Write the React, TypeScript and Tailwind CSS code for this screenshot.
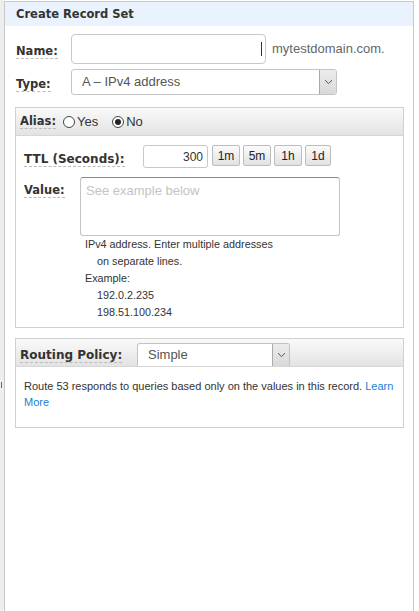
import React from "react";

const bold = { fontFamily: '"DejaVu Sans", Verdana, sans-serif' };
const arial = { fontFamily: '"Liberation Sans", Arial, sans-serif' };

function Label({ children, className = "text-[11.5px]" }: { children: React.ReactNode; className?: string }) {
  return (
    <span
      style={bold}
      className={"inline-block font-bold leading-[14px] text-[#333] border-b border-dashed border-[#bbb] " + className}
    >
      {children}
    </span>
  );
}

function Chevron() {
  return (
    <svg width="9" height="6" viewBox="0 0 9 6" fill="none">
      <path d="M1 1.2 L4.5 4.6 L8 1.2" stroke="#555" strokeWidth="1" />
    </svg>
  );
}

function SelectBox({ value, className }: { value: string; className: string }) {
  return (
    <div
      style={arial}
      className={"flex items-stretch border border-[#c4c4c4] rounded-[3px] bg-white overflow-hidden " + className}
    >
      <div className="flex-1 flex items-center pl-[10px] text-[13px] text-[#555]">{value}</div>
      <div className="w-[17px] flex items-center justify-center border-l border-[#aaa] bg-gradient-to-b from-[#ececec] to-[#d9d9d9]">
        <Chevron />
      </div>
    </div>
  );
}

function Radio({ checked, label }: { checked?: boolean; label: string }) {
  return (
    <div className="flex items-center gap-[2px]">
      <div className="w-[12px] h-[12px] rounded-full border border-[#444] bg-white flex items-center justify-center">
        {checked && <div className="w-[6px] h-[6px] rounded-full bg-[#222]" />}
      </div>
      <span style={arial} className="text-[13px] text-[#333] leading-[14px]">
        {label}
      </span>
    </div>
  );
}

function Btn({ t, w }: { t: string; w: string }) {
  return (
    <div
      style={arial}
      className={
        "h-[21px] flex items-center justify-center border border-[#bdbdbd] rounded-[2px] bg-gradient-to-b from-[#fbfbfb] to-[#e2e2e2] text-[12px] text-[#222] " +
        w
      }
    >
      {t}
    </div>
  );
}

export default function App() {
  return (
    <div className="flex w-[419px] h-[611px] bg-white overflow-hidden">
      <div className="w-[4px] h-[611px] bg-[#eeeeee] flex flex-col">
        <div className="mt-[382px] ml-[1px] w-[1px] h-[6px] bg-[#666]" />
      </div>
      <div className="w-[410px] h-[611px] mt-[1px] border-l border-r border-t border-[#c8c8c8] bg-white flex flex-col">
        <div className="h-[24px] bg-[#eaf2fd] flex items-center pl-[11px] pt-[1px]">
          <span style={bold} className="font-bold text-[11.5px] text-[#333]">
            Create Record Set
          </span>
        </div>

        {/* Name row */}
        <div className="flex items-center mt-[8px] pl-[11px] h-[30px]">
          <div className="w-[55px]">
            <Label>Name:</Label>
          </div>
          <div className="w-[195px] h-[30px] border border-[#c8c8c8] rounded-[4px] bg-white" />
          <div className="w-[1px] h-[14px] bg-[#333] ml-[-5px]" />
          <span style={arial} className="ml-[10px] text-[13px] text-[#666]">
            mytestdomain.com.
          </span>
        </div>

        {/* Type row */}
        <div className="flex items-center mt-[5px] pl-[11px] h-[26px]">
          <div className="w-[55px]">
            <Label>Type:</Label>
          </div>
          <SelectBox value="A – IPv4 address" className="w-[266px] h-[26px]" />
        </div>

        {/* Alias panel */}
        <div className="ml-[10px] mt-[12px] w-[389px] h-[221px] border border-[#d0d0d0] flex flex-col">
          <div className="h-[28px] flex items-center pl-[4px] bg-gradient-to-b from-[#fafafa] to-[#e3e3e3] border-b border-[#d6d6d6]">
            <Label>Alias:</Label>
            <div className="ml-[7px] flex items-center gap-[14px]">
              <Radio label="Yes" />
              <Radio checked label="No" />
            </div>
          </div>

          <div className="flex items-center mt-[9px] pl-[8px] h-[23px]">
            <div className="w-[119px]">
              <Label className="text-[12px]">TTL (Seconds):</Label>
            </div>
            <div
              style={arial}
              className="w-[65px] h-[23px] border border-[#c8c8c8] rounded-[3px] flex items-center justify-end pr-[4px] text-[12px] text-[#333]"
            >
              300
            </div>
            <div className="flex items-start gap-[3px] ml-[4px] self-start">
              <Btn t="1m" w="w-[28px]" />
              <Btn t="5m" w="w-[28px]" />
              <Btn t="1h" w="w-[28px]" />
              <Btn t="1d" w="w-[26px]" />
            </div>
          </div>

          <div className="flex items-start mt-[9px] pl-[8px]">
            <div className="w-[56px] mt-[-1px]">
              <Label>Value:</Label>
            </div>
            <div className="flex flex-col">
              <div
                style={arial}
                className="w-[260px] h-[59px] border border-[#c4c4c4] border-t-[#888] rounded-[3px] pl-[5px] pt-[5px] text-[13px] text-[#c4c4c4] leading-[16px]"
              >
                See example below
              </div>
              <div style={arial} className="pl-[5px] text-[10.8px] leading-[17px] text-[#333]">
                <div>IPv4 address. Enter multiple addresses</div>
                <div className="pl-[12px]">on separate lines.</div>
                <div>Example:</div>
                <div className="pl-[12px]">192.0.2.235</div>
                <div className="pl-[12px]">198.51.100.234</div>
              </div>
            </div>
          </div>
        </div>

        {/* Routing panel */}
        <div className="ml-[10px] mt-[10px] w-[389px] h-[90px] border border-[#d0d0d0] flex flex-col">
          <div className="h-[28px] flex items-end bg-gradient-to-b from-[#fafafa] to-[#e3e3e3] border-b border-[#d6d6d6]">
            <div className="w-[121px] pl-[4px] self-center">
              <Label className="text-[12px]">Routing Policy:</Label>
            </div>
            <SelectBox value="Simple" className="w-[153px] h-[23px] rounded-b-none border-b-0" />
          </div>
          <div style={arial} className="pl-[8px] pt-[11px] pr-[6px] text-[11px] leading-[16px] text-[#333]">
            <span>Route 53 responds to queries based only on the values in this record.</span>{" "}
            <span className="text-[#1a7fd0]">Learn</span>
            <br />
            <span className="text-[#1a7fd0]">More</span>
          </div>
        </div>
      </div>
    </div>
  );
}
